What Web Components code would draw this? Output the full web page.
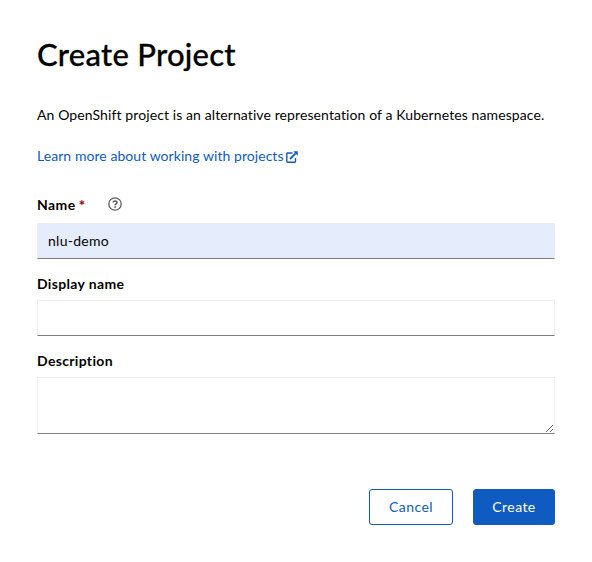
<!DOCTYPE html>
<html lang="en"><head><meta charset="utf-8"><title>Create Project</title>
<style>html,body{margin:0;background:#fff}body{font:14px/21px Lato,"Noto Sans",sans-serif;color:#030303;font-variant-ligatures:none}</style></head>
<body>
<project-dialog>
<span slot="title">Create Project</span>
<span slot="intro">An OpenShift project is an alternative representation of a Kubernetes namespace.</span>
<external-link slot="link">Learn more about working with projects</external-link>
<form-field label="Name" required value="nlu-demo" style="--label-spacing:.42px"></form-field>
<form-field label="Display name" style="--label-spacing:.34px"></form-field>
<form-field label="Description" multiline style="--label-spacing:.33px"></form-field>
<action-button slot="actions" style="--width:84px">Cancel</action-button>
<action-button slot="actions" primary style="--width:82px">Create</action-button>
</project-dialog>
<script>
class Base extends HTMLElement{
  connectedCallback(){if(!this.shadowRoot)this.attachShadow({mode:'open'}).innerHTML=this.render();}
}
customElements.define('project-dialog',class extends Base{render(){return `
<style>
:host{display:flow-root;box-sizing:border-box;width:592px;height:562px;padding:34px 37px 0}
h1{margin:0;font-size:31px;font-weight:500;line-height:40px;letter-spacing:.25px;white-space:nowrap;-webkit-text-stroke:.3px currentColor}
p{margin:30px 0 0;line-height:21px;letter-spacing:.1px;white-space:nowrap}
.link{margin-top:20px;height:21px}
.fields{margin-top:29px;display:grid;gap:14px}
footer{display:flex;justify-content:flex-end;gap:20px;margin-top:55px}
</style>
<h1><slot name="title"></slot></h1><p><slot name="intro"></slot></p>
<div class="link"><slot name="link"></slot></div>
<div class="fields"><slot></slot></div>
<footer><slot name="actions"></slot></footer>`}});
customElements.define('external-link',class extends Base{render(){return `
<style>:host{display:flex;align-items:center;color:#0f5bc2;letter-spacing:.06px;line-height:21px;gap:2px}svg{width:12px;height:12px;margin-top:2px;flex:none}a{white-space:nowrap}</style>
<a><slot></slot></a>
<svg viewBox="0 0 12 12" fill="none" stroke="currentColor"><path d="M6.5 2H1.5Q.8 2 .8 2.7V10.5Q.8 11.2 1.5 11.2H8.8Q9.5 11.2 9.5 10.5V7" stroke-width="1.4"/><path d="M4 8L9.6 2.4" stroke-width="1.8"/><path d="M7.3.2H11.8V4.7Z" fill="currentColor" stroke="none"/></svg>`}});
customElements.define('help-icon',class extends Base{render(){return `
<style>:host{display:block;width:14px;height:14px}svg{display:block}</style>
<svg width="14" height="14" viewBox="0 0 14 14" fill="none" stroke="#5c5f63"><circle cx="7" cy="7" r="6.2" stroke-width="1.3"/><path d="M5 5.5C5.2 4.3 6 3.9 7 3.9 8.2 3.9 9 4.6 9 5.5 9 6.8 7.1 6.8 7.1 8.2" stroke-width="1.5"/><circle cx="7.1" cy="10" r=".9" fill="#5c5f63" stroke="none"/></svg>`}});
customElements.define('form-field',class extends Base{render(){
const multi=this.hasAttribute('multiline'),req=this.hasAttribute('required');
return `
<style>
:host{display:block}
.head{display:flex;align-items:center;height:${req?18:21}px;margin-bottom:${req?10:6}px}
label{font-weight:700;font-size:14px;line-height:21px;letter-spacing:var(--label-spacing);white-space:nowrap}
i{font-style:normal;font-weight:700;font-size:16px;line-height:18px;color:#a30000;margin:2px 0 0 3px;width:7px}
help-icon{margin-left:22px}
input,textarea{display:block;box-sizing:border-box;width:100%;height:36px;margin:0;padding:0 10px 2px;border:1px solid #ededed;border-bottom-color:#7d8085;border-radius:0;outline:0;background:${req?'#e5ecfc':'#fff'};font:inherit;color:inherit;letter-spacing:.28px}
textarea{height:57px;resize:vertical}
</style>
<div class="head"><label for="control">${this.getAttribute('label')}</label>${req?'<i>*</i><help-icon></help-icon>':''}</div>
${multi?'<textarea id="control"></textarea>':`<input id="control" value="${this.getAttribute('value')||''}">`}`}});
customElements.define('action-button',class extends Base{render(){const p=this.hasAttribute('primary');return `
<style>button{display:block;box-sizing:border-box;width:var(--width);height:36px;border:1px solid #0f5bc2;border-radius:3px;padding:0 0 2px;font:inherit;letter-spacing:.42px;background:${p?'#0f5bc2':'#fff'};color:${p?'#fff':'#0f5bc2'}}:host{display:block}</style>
<button type="button"><slot></slot></button>`}});
</script></body></html>
